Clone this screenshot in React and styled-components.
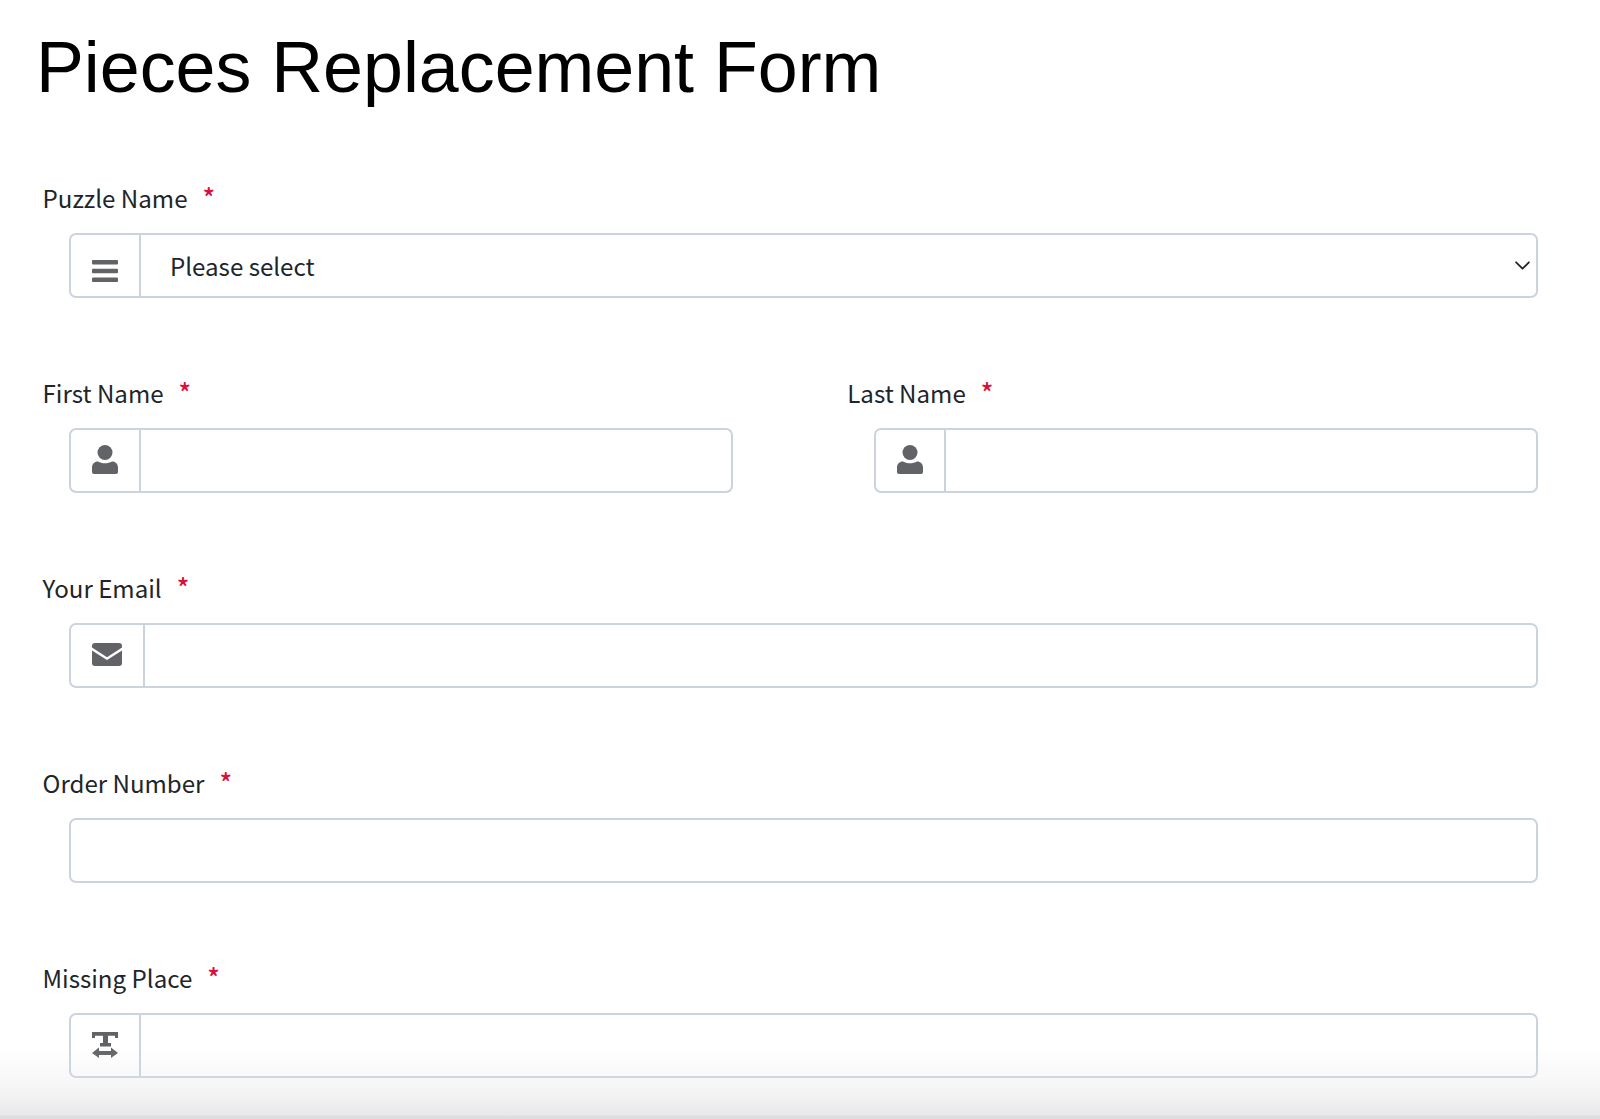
import React from 'react';
import styled, { createGlobalStyle } from 'styled-components';

const GlobalStyle = createGlobalStyle`
  html, body {
    margin: 0;
    padding: 0;
    background: #fff;
    overflow: hidden;
  }
  * { box-sizing: border-box; }
`;

const BORDER = '#ccd3df';
const TEXT = '#212529';
const ICON = '#626367';
const SANS = `"Noto Sans CJK SC", "Source Sans Pro", "Open Sans", sans-serif`;
const CHEVRON = `url("data:image/svg+xml,%3csvg xmlns='http://www.w3.org/2000/svg' viewBox='0 0 16 16'%3e%3cpath fill='none' stroke='%23212529' stroke-linecap='round' stroke-linejoin='round' stroke-width='1.700' d='M2 5l6 6 6-6'/%3e%3c/svg%3e")`;

const Page = styled.div`
  width: 1600px;
  height: 1119px;
  overflow: hidden;
  padding: 22px 62px 0 36px;
`;
const Title = styled.h1`
  margin: 0 0 68px;
  font-family: "Liberation Sans", Arial, sans-serif;
  font-size: 71.75px;
  line-height: 90px;
  font-weight: 400;
  color: #000;
`;
const Form = styled.form`
  display: flex;
  flex-direction: column;
  gap: 77.500px;
  padding-left: 6.500px;
`;
const Row = styled.div`
  display: grid;
  grid-template-columns: 1fr 1fr;
  column-gap: 114px;
`;
const Field = styled.div`
  display: flex;
  flex-direction: column;
`;
const Label = styled.label`
  display: flex;
  height: 36px;
  margin-bottom: 17px;
  font-family: ${SANS};
  font-size: 24.100px;
  line-height: 36px;
  color: ${TEXT};
`;
const Required = styled.span`
  margin-left: 15px;
  margin-top: -1px;
  color: #dc0f3c;
  font-size: 26px;
  font-weight: 500;
`;
const InputGroup = styled.div`
  display: flex;
  height: 64.500px;
  margin-left: 26.500px;
  border: 2px solid ${BORDER};
  border-radius: 7px;
  background: #fff;
`;
const Addon = styled.span`
  flex: none;
  display: flex;
  justify-content: center;
  width: ${({ $wide }) => ($wide ? '74px' : '70px')};
  padding-top: ${({ $top }) => $top}px;
  border-right: 2px solid ${BORDER};
  color: ${ICON};
`;
const TextInput = styled.input`
  flex: 1;
  min-width: 0;
  border: 0;
  outline: 0;
  background: transparent;
  padding: 0 28px;
  font-family: ${SANS};
  font-size: 24.100px;
  color: ${TEXT};
`;
const Select = styled.select`
  flex: 1;
  min-width: 0;
  appearance: none;
  border: 0;
  outline: 0;
  background: transparent ${CHEVRON} no-repeat right 5px top 22px / 17px 17px;
  padding: 0 29px;
  font-family: ${SANS};
  font-size: 24.100px;
  color: ${TEXT};
`;
const BottomShade = styled.div`
  position: fixed;
  left: 0;
  right: 0;
  bottom: 0;
  height: 72px;
  pointer-events: none;
  background: linear-gradient(to bottom, rgba(226, 226, 228, 0) 0%, rgba(226, 226, 228, 0.3) 55%, rgba(226, 226, 228, 0.75) 94%, #dedee0 96%, #dedee0 100%);
`;

const BarsIcon = () => (
  <svg width="26" height="24" viewBox="0 0 26 24" fill="currentColor">
    <rect x="0" y="1" width="26" height="4.500" rx="1" />
    <rect x="0" y="9.750" width="26" height="4.500" rx="1" />
    <rect x="0" y="18.500" width="26" height="4.500" rx="1" />
  </svg>
);
const UserIcon = () => (
  <svg width="26" height="29" viewBox="0 0 26 29" fill="currentColor">
    <circle cx="13" cy="7.500" r="7.500" />
    <path d="M6 16.500c2 1.200 4.400 1.800 7 1.800s5-.6 7-1.800c3.600 0 6 2.600 6 6V27a2 2 0 0 1-2 2H2a2 2 0 0 1-2-2v-4.500c0-3.400 2.400-6 6-6z" />
  </svg>
);
const MailIcon = () => (
  <svg width="30" height="23" viewBox="0 0 30 23" fill="currentColor">
    <path d="M3 0h24a3 3 0 0 1 3 3v1.600L15 14.200 0 4.600V3a3 3 0 0 1 3-3z" />
    <path d="M0 7.400l15 9.600 15-9.600V20a3 3 0 0 1-3 3H3a3 3 0 0 1-3-3z" />
  </svg>
);
const TextWidthIcon = () => (
  <svg width="26" height="26" viewBox="0 0 26 26" fill="currentColor">
    <path d="M0 0h26v6h-3V3.800h-7V11h3v3.500H8V11h3V3.800H3V6H0z" />
    <path d="M7 15.500v3.500h12v-3.500L26 21l-7 5v-3H7v3L0 21z" />
  </svg>
);

const FormField = ({ label, icon, top, wide, children }) => (
  <Field>
    <Label>
      {label}
      <Required>*</Required>
    </Label>
    <InputGroup>
      {icon && <Addon $top={top} $wide={wide}>{icon}</Addon>}
      {children || <TextInput type="text" />}
    </InputGroup>
  </Field>
);

export default function App() {
  return (
    <>
      <GlobalStyle />
      <Page>
        <Title>Pieces Replacement Form</Title>
        <Form>
          <FormField label="Puzzle Name" icon={<BarsIcon />} top={24}>
            <Select defaultValue="">
              <option value="">Please select</option>
            </Select>
          </FormField>
          <Row>
            <FormField label="First Name" icon={<UserIcon />} top={15} />
            <FormField label="Last Name" icon={<UserIcon />} top={15} />
          </Row>
          <FormField label="Your Email" icon={<MailIcon />} top={18} wide />
          <FormField label="Order Number" />
          <FormField label="Missing Place" icon={<TextWidthIcon />} top={17} />
        </Form>
      </Page>
      <BottomShade />
    </>
  );
}
